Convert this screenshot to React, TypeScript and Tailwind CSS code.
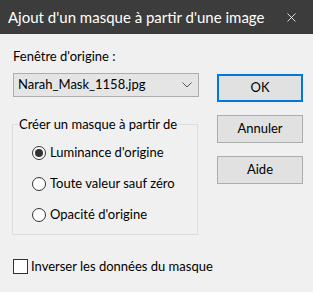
import { X } from "lucide-react";

const font = "font-['Lato','Noto_Sans',sans-serif]";

function Radio({ label, checked }: { label: string; checked?: boolean }) {
  return (
    <label className="flex items-center h-[31px]">
      <span className="w-[14px] h-[14px] rounded-full border border-[#333] bg-white flex items-center justify-center shrink-0">
        {checked && <span className="w-[8px] h-[8px] rounded-full bg-[#333]" />}
      </span>
      <span className="ml-[4px] text-[13px] text-black whitespace-nowrap">{label}</span>
    </label>
  );
}

function Button({ label, primary }: { label: string; primary?: boolean }) {
  return (
    <button
      className={`w-[86px] h-[28px] bg-[#e1e1e1] text-[13px] text-black ${
        primary ? "border-2 border-[#0078d7]" : "border border-[#adadad]"
      }`}
    >
      {label}
    </button>
  );
}

export default function App() {
  return (
    <div className={`w-[313px] h-[292px] bg-[#f0f0f0] ${font}`}>
      <div className="h-[34px] bg-[#3c3c3c] flex items-center pl-[8px] pr-[14px]">
        <span className="text-white text-[15px] whitespace-nowrap">Ajout d'un masque à partir d'une image</span>
        <X className="ml-auto shrink-0 text-white w-[15px] h-[15px]" strokeWidth={1.3} />
      </div>

      <div className="flex pl-[12px] pt-[14px]">
        <div className="w-[187px] flex flex-col">
          <div className="text-[13px] text-black leading-[16px] pl-[1px] whitespace-nowrap">Fenêtre d'origine :</div>
          <div className="mt-[9px] ml-[1px] h-[24px] bg-[#e5e5e5] border border-[#adadad] flex items-center justify-between pl-[4px] pr-[5px]">
            <span className="text-[13px] text-black whitespace-nowrap">Narah_Mask_1158.jpg</span>
            <svg width="10" height="6" viewBox="0 0 10 6" className="mr-[1px]">
              <polyline points="0.5,0.5 5,5 9.5,0.5" fill="none" stroke="#555" strokeWidth="1" />
            </svg>
          </div>

          <fieldset className="mt-[18px] border border-[#dcdcdc] w-[186px] h-[120px] px-[19px] pb-0">
            <legend className="text-[13px] text-black px-[1px] -ml-[14px] whitespace-nowrap">Créer un masque à partir de</legend>
            <div className="flex flex-col mt-[3px]">
              <Radio label="Luminance d'origine" checked />
              <Radio label="Toute valeur sauf zéro" />
              <Radio label="Opacité d'origine" />
            </div>
          </fieldset>

          <label className="mt-[22px] ml-[1px] flex items-center">
            <span className="w-[15px] h-[15px] border border-[#333] bg-white shrink-0" />
            <span className="ml-[3px] text-[13px] text-black whitespace-nowrap">Inverser les données du masque</span>
          </label>
        </div>

        <div className="ml-[18px] mt-[26px] flex flex-col gap-[13px]">
          <Button label="OK" primary />
          <Button label="Annuler" />
          <Button label="Aide" />
        </div>
      </div>
    </div>
  );
}
